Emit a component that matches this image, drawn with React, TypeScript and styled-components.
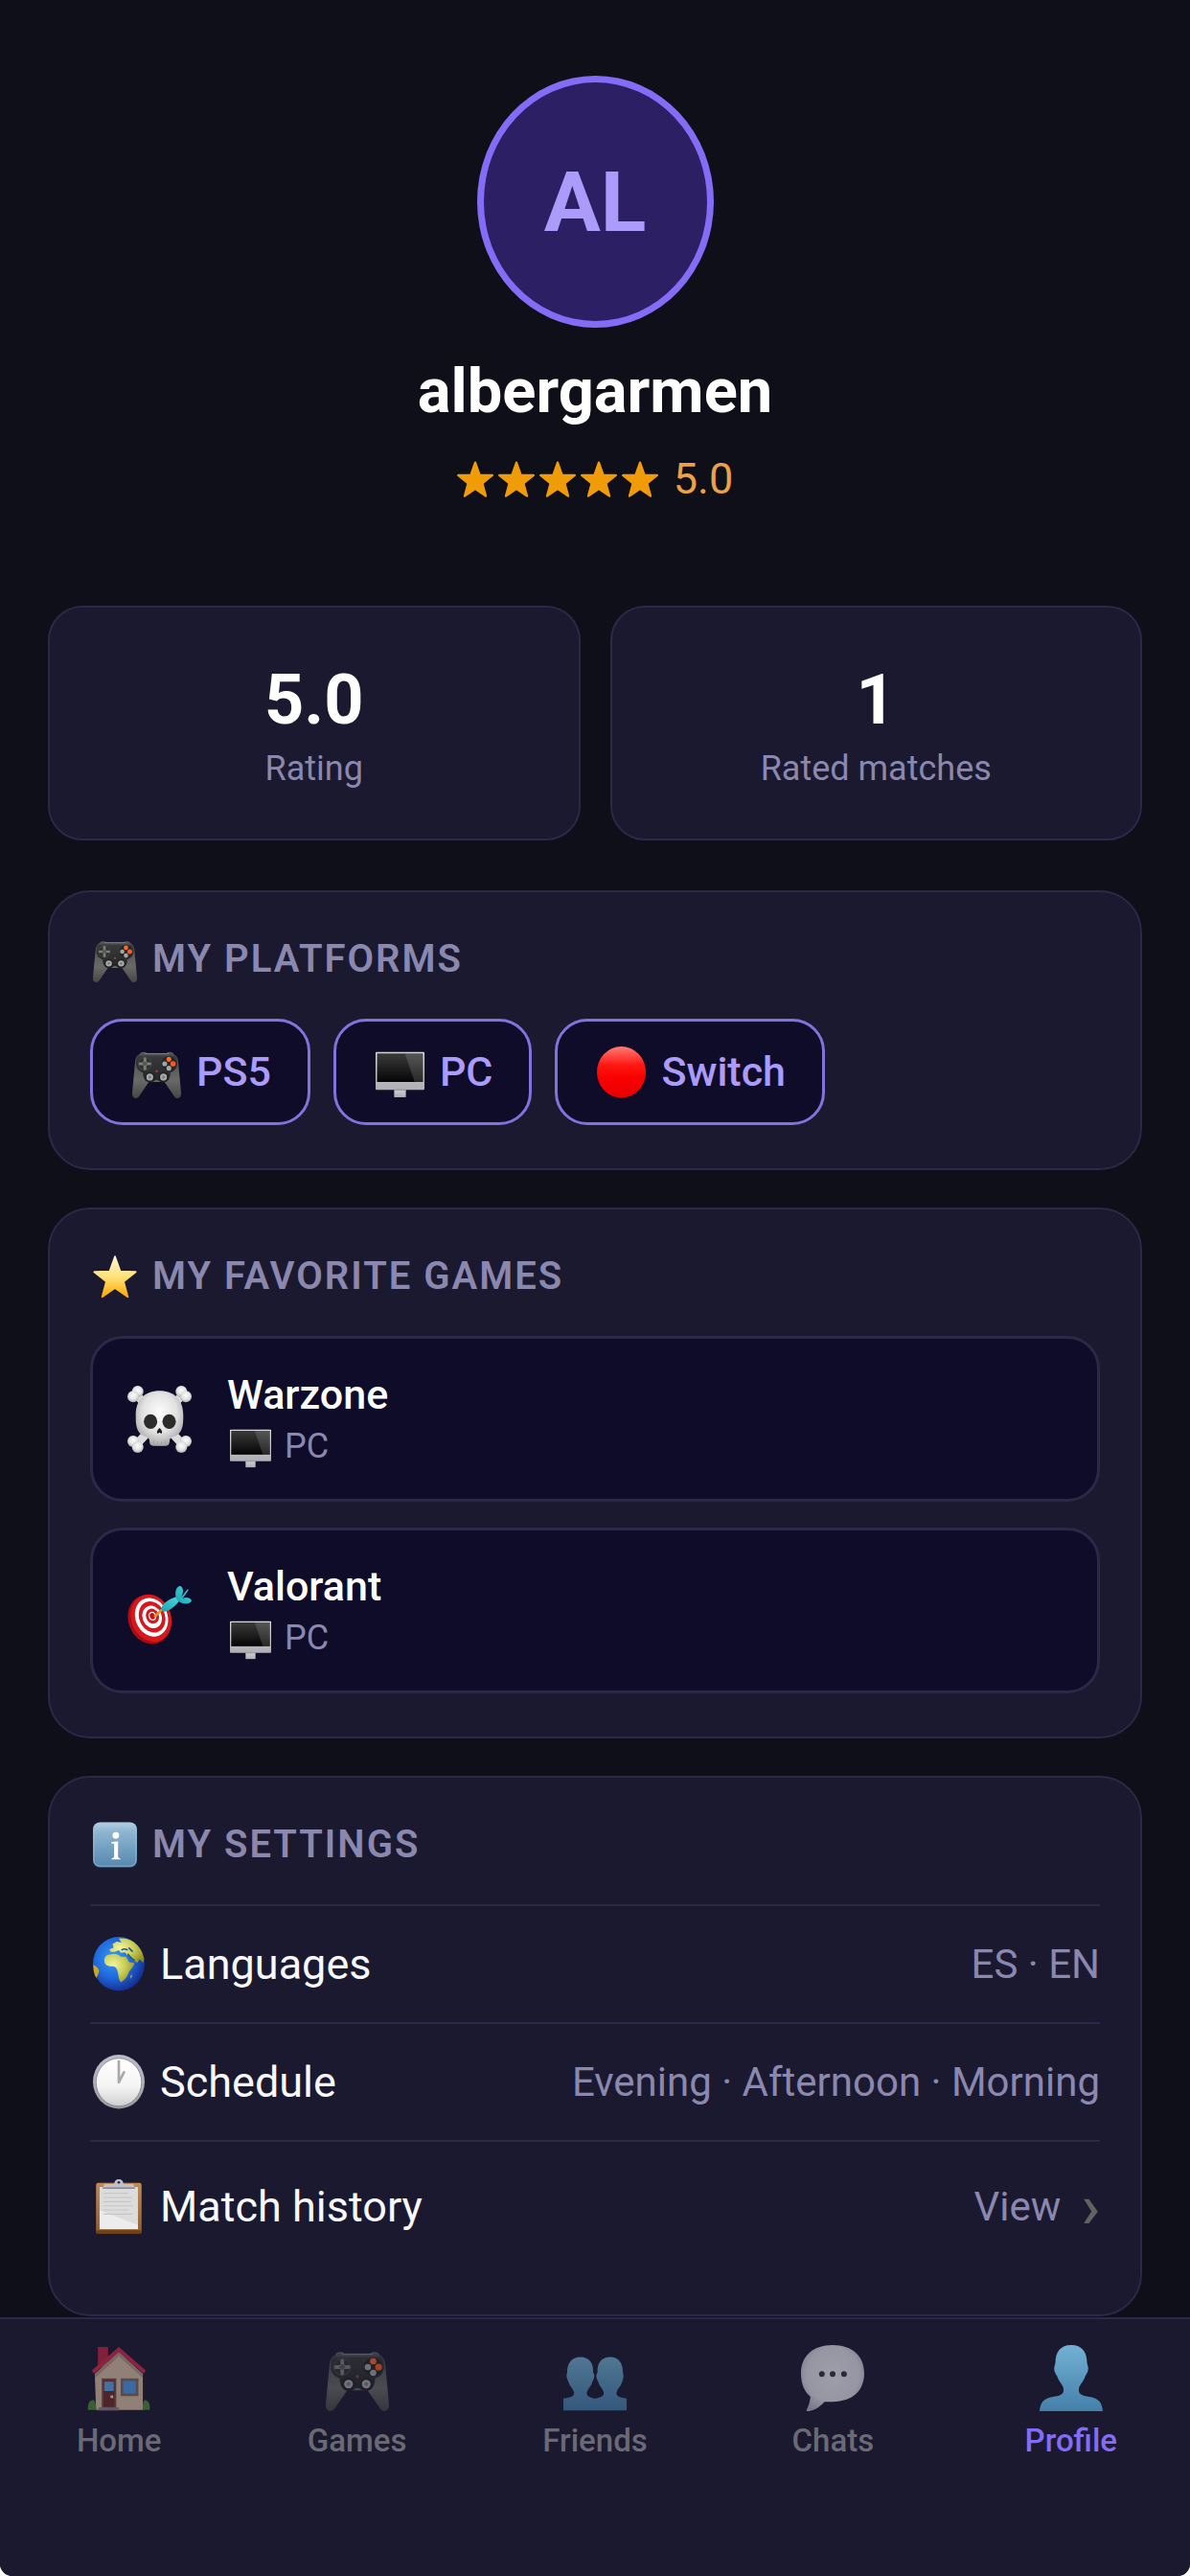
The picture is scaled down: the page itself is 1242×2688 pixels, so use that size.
import React from 'react';
import styled, { createGlobalStyle } from 'styled-components';

const color = {
  page: '#0f0f19',
  surface: '#1a1930',
  inset: '#0f0c2a',
  line: '#2a2948',
  accent: '#846cf6',
  accentSoft: '#ab9bfb',
  accentDeep: '#2d1f63',
  muted: '#8a88ae',
  faint: '#6a6a76',
  gold: '#f09c08',
  goldText: '#eba246',
};

const GlobalStyle = createGlobalStyle`
  *, *::before, *::after { box-sizing: border-box; }
  html { background: #fff; }
  body {
    margin: 0;
    font-family: Roboto, Inter, "Liberation Sans", sans-serif;
    color: #fff;
  }
  h1, h2, p, ul, dl, dd, dt { margin: 0; padding: 0; font: inherit; }
  ul { list-style: none; }
  button { font: inherit; color: inherit; background: none; border: 0; padding: 0; cursor: pointer; }
  a { color: inherit; text-decoration: none; }
`;

/* ---------- layout ---------- */

const Screen = styled.div`
  display: flex;
  flex-direction: column;
  min-height: 100vh;
  overflow: hidden;
  background: ${color.page};
  border-radius: 0 0 13px 13px;
`;

const Content = styled.main`
  flex: 1;
  padding: 79px 50px 0;
`;

const Sections = styled.div`
  display: flex;
  flex-direction: column;
  gap: 39px;
`;

/* ---------- header ---------- */

const Header = styled.header`
  display: flex;
  flex-direction: column;
  align-items: center;
  margin-bottom: 105px;
`;

const Avatar = styled.div`
  display: grid;
  place-items: center;
  width: 247px;
  height: 263px;
  margin-bottom: 26px;
  border: 7px solid ${color.accent};
  border-radius: 50%;
  background: ${color.accentDeep};
  color: ${color.accentSoft};
  font-size: 88px;
  font-weight: 700;
`;

const UserName = styled.h1`
  margin-bottom: 25px;
  font-size: 65px;
  font-weight: 700;
  line-height: 80px;
`;

const Score = styled.div`
  display: flex;
  align-items: center;
  gap: 16px;
  color: ${color.goldText};
  font-size: 45px;
  line-height: 54px;
`;

const Stars = styled.span`
  display: flex;
  gap: 5px;
  color: ${color.gold};
`;

const StarIcon = styled.svg`
  display: block;
  width: 38px;
  height: 39px;
`;

/* ---------- stats ---------- */

const Stats = styled.dl`
  display: grid;
  grid-template-columns: 1fr 1fr;
  gap: 31px;
  margin-bottom: 52px;
`;

const Stat = styled.div`
  display: flex;
  flex-direction: column-reverse;
  align-items: center;
  gap: 6px;
  padding: 55px 24px 50px;
  border: 2px solid ${color.line};
  border-radius: 36px;
  background: ${color.surface};
`;

const StatValue = styled.dd`
  font-size: 72px;
  font-weight: 700;
  line-height: 84px;
`;

const StatLabel = styled.dt`
  color: ${color.muted};
  font-size: 36px;
  line-height: 46px;
`;

/* ---------- cards ---------- */

const Card = styled.section`
  padding: 43px 42px 45px;
  border: 2px solid ${color.line};
  border-radius: 44px;
  background: ${color.surface};
`;

const CardTitle = styled.h2`
  display: flex;
  align-items: center;
  gap: 13px;
  margin-bottom: 35px;
  color: ${color.muted};
  font-size: 40px;
  font-weight: 600;
  line-height: 54px;
  letter-spacing: 2px;
  text-transform: uppercase;
`;

const EmojiSvg = styled.svg<{ $width: number; $height: number }>`
  display: block;
  flex: none;
  width: ${(p) => p.$width}px;
  height: ${(p) => p.$height}px;
  margin: 0 3px;
  overflow: visible;
`;

const Pills = styled.ul`
  display: flex;
  flex-wrap: wrap;
  gap: 24px;
`;

const Pill = styled.li`
  display: flex;
  align-items: center;
  gap: 13px;
  padding: 25px 38px;
  border: 3px solid #8172dc;
  border-radius: 34px;
  background: ${color.inset};
  color: ${color.accentSoft};
  font-size: 43px;
  font-weight: 500;
  line-height: 55px;
`;

const Games = styled.ul`
  display: flex;
  flex-direction: column;
  gap: 27px;
`;

const Game = styled.li`
  display: flex;
  align-items: center;
  gap: 34px;
  padding: 31px 33px;
  border: 3px solid ${color.line};
  border-radius: 34px;
  background: ${color.inset};
`;

const GameName = styled.p`
  margin-bottom: 4px;
  font-size: 43px;
  font-weight: 500;
  line-height: 54px;
`;

const GamePlatform = styled.p`
  display: flex;
  align-items: center;
  gap: 11px;
  color: ${color.muted};
  font-size: 36px;
  line-height: 47px;
`;

const SettingRow = styled.div<{ $tall?: boolean }>`
  display: flex;
  align-items: center;
  justify-content: space-between;
  width: 100%;
  padding: ${(p) => (p.$tall ? 39 : 32)}px 0;
  border-top: 2px solid ${color.line};
  text-align: left;
`;

const SettingLabel = styled.span`
  display: flex;
  align-items: center;
  gap: 13px;
  color: #f8f8ff;
  font-size: 45px;
  line-height: 57px;
`;

const SettingValue = styled.span`
  display: flex;
  align-items: center;
  gap: 21px;
  color: ${color.muted};
  font-size: 42px;
  line-height: 57px;
`;

const Chevron = styled.span`
  color: #626262;
  font-size: 65px;
  font-weight: 500;
`;

/* ---------- tab bar ---------- */

const TabBar = styled.nav`
  display: grid;
  grid-template-columns: repeat(5, 1fr);
  padding: 27px 0 121px;
  border-top: 2px solid ${color.line};
  background: ${color.surface};
`;

const Tab = styled.a<{ $active?: boolean }>`
  display: flex;
  flex-direction: column;
  align-items: center;
  gap: 11px;
  color: ${(p) => (p.$active ? color.accent : color.faint)};
  font-size: 33px;
  font-weight: 500;
  line-height: 40px;

  svg { opacity: ${(p) => (p.$active ? 1 : 0.62)}; }
`;

const HiddenSvg = styled.svg`
  position: absolute;
  width: 0;
  height: 0;
`;

/* ---------- drawings, all on a 100 x 105 grid ---------- */

const Gradients = () => (
  <HiddenSvg aria-hidden="true">
    <defs>
      <linearGradient id="padBody" x1="0" y1="0" x2="0" y2="1">
        <stop offset="0" stopColor="#5b5d5f" /><stop offset=".12" stopColor="#38393b" /><stop offset="1" stopColor="#232425" />
      </linearGradient>
      <linearGradient id="padGrip" x1="0" y1="0" x2="0" y2="1">
        <stop offset="0" stopColor="#4a4b4a" /><stop offset=".6" stopColor="#696a67" /><stop offset="1" stopColor="#464744" />
      </linearGradient>
      <linearGradient id="glass" x1="0" y1="0" x2="0" y2="1">
        <stop offset="0" stopColor="#3b3b3b" /><stop offset="1" stopColor="#050505" />
      </linearGradient>
      <linearGradient id="metal" x1="0" y1="0" x2="0" y2="1">
        <stop offset="0" stopColor="#dadade" /><stop offset="1" stopColor="#aeaeb4" />
      </linearGradient>
      <linearGradient id="ball" x1="0" y1="0" x2="0" y2="1">
        <stop offset="0" stopColor="#ff7d78" /><stop offset=".35" stopColor="#ff1a14" /><stop offset=".6" stopColor="#fb0000" /><stop offset="1" stopColor="#e60000" />
      </linearGradient>
      <linearGradient id="starFill" x1="0" y1="0" x2="0" y2="1">
        <stop offset=".1" stopColor="#fff3c4" /><stop offset=".5" stopColor="#ffe27a" /><stop offset="1" stopColor="#fba705" />
      </linearGradient>
      <radialGradient id="bone" cx=".5" cy=".4" r=".6">
        <stop offset="0" stopColor="#fdfdfd" /><stop offset=".6" stopColor="#e2e2e2" /><stop offset="1" stopColor="#a9a9ab" />
      </radialGradient>
      <linearGradient id="info" x1="0" y1="0" x2="0" y2="1">
        <stop offset="0" stopColor="#b5d0e4" /><stop offset=".2" stopColor="#8fb6d2" /><stop offset="1" stopColor="#5587ad" />
      </linearGradient>
      <radialGradient id="ocean" cx=".4" cy=".4" r=".62">
        <stop offset="0" stopColor="#3b9df2" /><stop offset=".6" stopColor="#1e66dc" /><stop offset="1" stopColor="#16308f" />
      </radialGradient>
      <radialGradient id="land" cx=".3" cy=".4" r=".8">
        <stop offset="0" stopColor="#f3f5a6" /><stop offset=".5" stopColor="#c9cf55" /><stop offset="1" stopColor="#8b8a1f" />
      </radialGradient>
      <linearGradient id="bezel" x1="0" y1="0" x2="0" y2="1">
        <stop offset="0" stopColor="#b9bccb" /><stop offset=".5" stopColor="#b0b0b8" /><stop offset="1" stopColor="#98989c" />
      </linearGradient>
      <linearGradient id="dial" x1="0" y1="0" x2="0" y2="1">
        <stop offset="0" stopColor="#fff" /><stop offset=".6" stopColor="#f4f4f4" /><stop offset="1" stopColor="#cfcfd1" />
      </linearGradient>
      <linearGradient id="wood" x1="0" y1="0" x2="0" y2="1">
        <stop offset="0" stopColor="#c08a56" /><stop offset="1" stopColor="#8f5f33" />
      </linearGradient>
      <linearGradient id="person" x1="0" y1="0" x2="0" y2="1">
        <stop offset="0" stopColor="#72b1d3" /><stop offset="1" stopColor="#447fa9" />
      </linearGradient>
      <radialGradient id="bubble" cx=".5" cy=".45" r=".6">
        <stop offset="0" stopColor="#f0f0f6" /><stop offset=".7" stopColor="#e2e2ea" /><stop offset="1" stopColor="#b4b4be" />
      </radialGradient>
      <linearGradient id="dart" x1="0" y1="1" x2="1" y2="0">
        <stop offset="0" stopColor="#17a3b5" /><stop offset="1" stopColor="#4fd8dc" />
      </linearGradient>
    </defs>
  </HiddenSvg>
);

const STAR = 'M50 3 L62 37 L97 38 L69.500 60 L79 95 L50 75 L21 95 L30.500 60 L3 38 L38 37 Z';

const drawings = {
  gamepad: (
    <>
      <path d="M6 30 C7 18 14 15 22 14 L78 14 C86 15 93 18 94 30 L100 94 C101 106 91 108 86 101 L66 72 L34 72 L14 101 C9 108 -1 106 0 94 Z" fill="url(#padGrip)" />
      <path d="M8 30 C8 19 15 14 23 14 L77 14 C85 14 92 19 92 30 C94 44 86 50 78 53 C78 66 72 73 64 73 C57 73 54 68 50 68 C46 68 43 73 36 73 C28 73 22 66 22 53 C14 50 6 44 8 30 Z" fill="url(#padBody)" />
      <path d="M16 15 Q22 10 29 14 M71 14 Q78 10 84 15" fill="none" stroke="#6c6e70" strokeWidth="2" />
      <path d="M26 14.500 H74" stroke="#7d8083" strokeWidth="2" />
      <circle cx="26" cy="35" r="13" fill="#2e3031" stroke="#4b4d4e" strokeWidth="1.500" />
      <path d="M26 25 V45 M16 35 H36" stroke="#7d7e77" strokeWidth="6" strokeLinecap="round" />
      <path d="M26 31 V39 M22 35 H30" stroke="#55574f" strokeWidth="4" />
      <circle cx="75" cy="35" r="15" fill="#242526" />
      <circle cx="75" cy="26" r="5" fill="#ff6a2b" />
      <circle cx="83.500" cy="35" r="5.500" fill="#ff5722" />
      <circle cx="66.500" cy="35" r="5" fill="#a3a5a8" />
      <circle cx="75" cy="44" r="5" fill="#a3a5a8" />
      <circle cx="36" cy="62" r="9.500" fill="#1d1e1f" /><circle cx="36" cy="62" r="7" fill="#a9abab" /><circle cx="36" cy="62" r="3" fill="#7a7c7c" />
      <circle cx="64" cy="62" r="9.500" fill="#1d1e1f" /><circle cx="64" cy="62" r="7" fill="#a9abab" /><circle cx="64" cy="62" r="3" fill="#7a7c7c" />
      <circle cx="50" cy="50" r="2.500" fill="#a5412e" />
    </>
  ),
  desktop: (
    <>
      <path d="M38 82 H62 V103 H38 Z" fill="url(#metal)" />
      <rect x="0" y="11" width="100" height="77" rx="2" fill="url(#metal)" />
      <rect x="3" y="14" width="94" height="58" fill="url(#glass)" />
      <path d="M60 14 H97 V72 H80 Z" fill="#fff" opacity=".14" />
      <path d="M38 88 H62" stroke="#8c8c92" strokeWidth="2" />
    </>
  ),
  ball: <ellipse cx="50" cy="52" rx="50" ry="52" fill="url(#ball)" />,
  star: <path d={STAR} transform="translate(0 4)" fill="url(#starFill)" stroke="url(#starFill)" strokeWidth="4" strokeLinejoin="round" />,
  info: (
    <>
      <rect x="0" y="1" width="100" height="103" rx="16" fill="url(#info)" />
      <rect x="2.500" y="3" width="95" height="98" rx="14" fill="none" stroke="#a6c7de" strokeWidth="2" opacity=".6" />
      <circle cx="52" cy="31" r="7.500" fill="#fff" />
      <path d="M42 46 L57 45 V81 L62 84 V86 H42 V84 L48 81 V50 L42 49 Z" fill="#fff" />
    </>
  ),
  skull: (
    <>
      <path d="M13 13 L87 93 M87 13 L13 93" stroke="#dcdcde" strokeWidth="13" />
      {[[16, 9], [9, 17], [84, 9], [91, 17], [9, 87], [16, 96], [91, 87], [84, 96]].map(([x, y]) => (
        <circle key={`${x}-${y}`} cx={x} cy={y} r="9" fill="url(#bone)" />
      ))}
      <path d="M50 8 C73 8 87 22 87 46 C87 58 87 68 79 76 C74 80 68 79 66 84 C65 90 66 93 60 94 L40 94 C34 93 35 90 34 84 C32 79 26 80 21 76 C13 68 13 58 13 46 C13 22 27 8 50 8 Z" fill="url(#bone)" />
      <ellipse cx="36" cy="56" rx="10.500" ry="11.500" fill="#2c2c2e" />
      <ellipse cx="65" cy="56" rx="10.500" ry="11.500" fill="#2c2c2e" />
      <path d="M50 66 C54 70 55 73 53 75 L50 73 L47 75 C45 73 46 70 50 66 Z" fill="#1d1d1f" />
      <path d="M41 86 V93 M47 87 V94 M53 87 V94 M59 86 V93" stroke="#a2a2a6" strokeWidth="1.500" />
    </>
  ),
  dart: (
    <>
      <g transform="rotate(-22 36 64)">
        <ellipse cx="33" cy="65" rx="32" ry="39" fill="#a80d12" />
        <ellipse cx="37" cy="64" rx="31" ry="38" fill="#d8161d" />
        <ellipse cx="38" cy="63" rx="25" ry="31" fill="#fff" />
        <ellipse cx="39" cy="63" rx="20" ry="25" fill="#d8161d" />
        <ellipse cx="39" cy="63" rx="15" ry="18" fill="#fff" />
        <ellipse cx="40" cy="62" rx="10" ry="12" fill="#d8161d" />
        <ellipse cx="40" cy="62" rx="6" ry="7" fill="#fff" />
        <ellipse cx="40" cy="62" rx="4" ry="5" fill="#c40f16" />
      </g>
      <path d="M43 61 L55 49" stroke="#d59a2b" strokeWidth="4" strokeLinecap="round" />
      <path d="M52 50 C54 40 66 33 78 30 L82 35 C76 44 66 53 56 54 Z" fill="url(#dart)" />
      <path d="M76 33 C73 22 76 15 82 13 C88 16 88 24 83 32 L94 18 L95 20 L86 33 C92 30 99 32 100 37 C95 43 86 42 79 37 Z" fill="url(#dart)" />
    </>
  ),
  globe: (
    <>
      <ellipse cx="50" cy="52" rx="50" ry="52" fill="url(#ocean)" />
      <path d="M22 46 C22 38 26 34 34 34 C42 31 48 34 54 38 L64 38 L70 49 L80 50 C80 57 73 61 70 67 C67 76 60 86 54 87 C50 84 50 76 48 68 C47 60 42 56 36 57 C28 57 22 53 22 46 Z" fill="url(#land)" />
      <path d="M34 29 L32 24 L40 21 L38 14 L46 9 L55 11 L50 3 Q66 1 79 10 Q95 22 99 42 L97 50 L90 43 L86 50 L80 47 L74 38 L66 35 L62 30 L54 31 L50 26 L42 29 Z" fill="url(#land)" />
      <path d="M56 25 Q60 22 66 25 M68 34 Q74 42 80 45 M70 22 L76 28" fill="none" stroke="#225b8f" strokeWidth="3" strokeLinecap="round" />
      <path d="M1 54 Q10 58 12 66 Q10 74 6 79 Q0 68 1 54 Z" fill="#c9a92c" />
      <path d="M72 76 L76 72 L74 81 Z" fill="#b9b73c" />
    </>
  ),
  clock: (
    <>
      <ellipse cx="50" cy="52" rx="50" ry="52" fill="url(#bezel)" />
      <ellipse cx="50" cy="53" rx="44" ry="46" fill="url(#dial)" stroke="#85858d" strokeWidth="1.500" />
      <path d="M50 13 V53 L60 34" fill="none" stroke="#a9a9ad" strokeWidth="5" strokeLinejoin="round" strokeLinecap="round" />
    </>
  ),
  clipboard: (
    <>
      <rect x="6" y="7" width="88" height="98" rx="4" fill="url(#wood)" />
      <path d="M6 98 H94 V101 Q94 105 90 105 H10 Q6 105 6 101 Z" fill="#6d421b" />
      <rect x="13" y="15" width="74" height="81" fill="#dcdcdc" />
      <path d="M13 96 V60 L87 88 V96 Z" fill="#ececec" />
      <path d="M20 27 H68 M20 35 H76 M20 43 H74 M20 51 H78 M20 59 H70 M20 67 H76" stroke="#c6c6c8" strokeWidth="2" />
      <path d="M19 17 L22 9 H41 Q42 0 50 0 Q58 0 59 9 H78 L81 17 Z" fill="#bfc2cc" />
      <path d="M19 17 H81" stroke="#84868f" strokeWidth="2.500" />
      <circle cx="50" cy="6" r="2.500" fill="#232338" />
    </>
  ),
  house: (
    <>
      <rect x="17" y="3" width="16" height="32" fill="#c4253f" />
      <path d="M12 46 L50 11 L88 46 V103 H14 Z" fill="#d9bfa4" />
      <path d="M12 46 L50 11 L88 46 V52 L50 18 L13 52 Z" fill="#b69a82" />
      <path d="M9 43 L50 7 L91 43" fill="none" stroke="#d62a4c" strokeWidth="6" />
      <rect x="23" y="53" width="23" height="47" fill="#7d5142" /><rect x="26" y="56" width="17" height="42" fill="#6b2b25" />
      <rect x="27" y="58" width="15" height="15" fill="#5aa9ea" />
      <circle cx="39" cy="82" r="2.500" fill="#ecd9d3" />
      <rect x="53" y="53" width="28" height="28" fill="#7b6a60" /><rect x="57" y="57" width="20" height="20" fill="#4c9de6" />
      <rect x="18" y="99" width="32" height="5" fill="#8f7f88" />
      <path d="M1 103 Q0 88 9 87 Q14 87 14 103 Z M88 103 Q87 87 92 87 Q100 89 99 103 Z" fill="#4d8a35" />
    </>
  ),
  people: (
    <path d="M27 19 C41 19 48 29 47 43 L49 48 C49 54 46 57 45 61 C43 67 37 71 37 77 C37 81 42 84 50 85 C58 84 64 81 64 77 C64 71 58 67 56 61 C55 57 52 54 52 48 L54 43 C53 29 60 19 74 19 C88 19 94 29 94 43 L95 48 C95 54 93 57 92 61 C90 67 84 71 84 77 C84 82 91 84 100 85 V104 H0 V85 C9 84 17 82 17 77 C17 71 11 67 9 61 C8 57 5 54 5 48 L6 43 C6 29 13 19 27 19 Z" fill="url(#person)" />
  ),
  bubble: (
    <>
      <path d="M50 0 C82 0 100 18 100 45 C100 72 82 90 50 90 H37 C30 98 20 105 9 105 C7 104 13 98 15 82 C4 73 0 60 0 45 C0 18 18 0 50 0 Z" fill="url(#bubble)" />
      <circle cx="33" cy="46" r="4.500" fill="#33333d" /><circle cx="50" cy="46" r="4.500" fill="#33333d" /><circle cx="68" cy="46" r="4.500" fill="#33333d" />
    </>
  ),
  person: (
    <path d="M50 0 C67 0 75 11 75 28 L77 36 C77 43 74 46 72 50 C70 58 62 64 62 71 C62 80 70 80 78 82 C92 84 99 90 100 105 H0 C1 90 8 84 22 82 C30 80 38 80 38 71 C38 64 30 58 28 50 C26 46 23 43 23 36 L25 28 C25 11 33 0 50 0 Z" fill="url(#person)" />
  ),
};

type DrawingName = keyof typeof drawings;

const Emoji = ({ name, size }: { name: DrawingName; size: number }) => (
  <EmojiSvg
    viewBox="0 0 100 105"
    preserveAspectRatio="none"
    aria-hidden="true"
    $width={size}
    $height={Math.round(size * 1.05)}
  >
    {drawings[name]}
  </EmojiSvg>
);

/* ---------- data ---------- */

const platforms: { icon: DrawingName; label: string }[] = [
  { icon: 'gamepad', label: 'PS5' },
  { icon: 'desktop', label: 'PC' },
  { icon: 'ball', label: 'Switch' },
];

const games: { icon: DrawingName; name: string; platform: string }[] = [
  { icon: 'skull', name: 'Warzone', platform: 'PC' },
  { icon: 'dart', name: 'Valorant', platform: 'PC' },
];

const settings: { icon: DrawingName; label: string; value: string }[] = [
  { icon: 'globe', label: 'Languages', value: 'ES · EN' },
  { icon: 'clock', label: 'Schedule', value: 'Evening · Afternoon · Morning' },
];

const tabs: { icon: DrawingName; label: string; active?: boolean }[] = [
  { icon: 'house', label: 'Home' },
  { icon: 'gamepad', label: 'Games' },
  { icon: 'people', label: 'Friends' },
  { icon: 'bubble', label: 'Chats' },
  { icon: 'person', label: 'Profile', active: true },
];

export default function App() {
  return (
    <Screen>
      <GlobalStyle />
      <Gradients />
      <Content>
        <Header>
          <Avatar>AL</Avatar>
          <UserName>albergarmen</UserName>
          <Score>
            <Stars aria-hidden="true">
              {[1, 2, 3, 4, 5].map((n) => (
                <StarIcon key={n} viewBox="0 0 100 100">
                  <path d={STAR} fill="currentColor" stroke="currentColor" strokeWidth="6" strokeLinejoin="round" />
                </StarIcon>
              ))}
            </Stars>
            <span>5.0</span>
          </Score>
        </Header>

        <Stats>
          <Stat>
            <StatLabel>Rating</StatLabel>
            <StatValue>5.0</StatValue>
          </Stat>
          <Stat>
            <StatLabel>Rated matches</StatLabel>
            <StatValue>1</StatValue>
          </Stat>
        </Stats>

        <Sections>
          <Card>
            <CardTitle><Emoji name="gamepad" size={46} />My platforms</CardTitle>
            <Pills>
              {platforms.map((p) => (
                <Pill key={p.label}><Emoji name={p.icon} size={51} />{p.label}</Pill>
              ))}
            </Pills>
          </Card>

          <Card>
            <CardTitle><Emoji name="star" size={46} />My favorite games</CardTitle>
            <Games>
              {games.map((g) => (
                <Game key={g.name}>
                  <Emoji name={g.icon} size={67} />
                  <div>
                    <GameName>{g.name}</GameName>
                    <GamePlatform><Emoji name="desktop" size={43} />{g.platform}</GamePlatform>
                  </div>
                </Game>
              ))}
            </Games>
          </Card>

          <Card>
            <CardTitle><Emoji name="info" size={46} />My settings</CardTitle>
            {settings.map((s) => (
              <SettingRow key={s.label}>
                <SettingLabel><Emoji name={s.icon} size={54} />{s.label}</SettingLabel>
                <SettingValue>{s.value}</SettingValue>
              </SettingRow>
            ))}
            <SettingRow as="button" type="button" $tall>
              <SettingLabel><Emoji name="clipboard" size={54} />Match history</SettingLabel>
              <SettingValue>View <Chevron aria-hidden="true">›</Chevron></SettingValue>
            </SettingRow>
          </Card>
        </Sections>
      </Content>

      <TabBar aria-label="Main">
        {tabs.map((t) => (
          <Tab key={t.label} href={`#${t.label.toLowerCase()}`} $active={t.active} aria-current={t.active ? 'page' : undefined}>
            <Emoji name={t.icon} size={66} />
            {t.label}
          </Tab>
        ))}
      </TabBar>
    </Screen>
  );
}
